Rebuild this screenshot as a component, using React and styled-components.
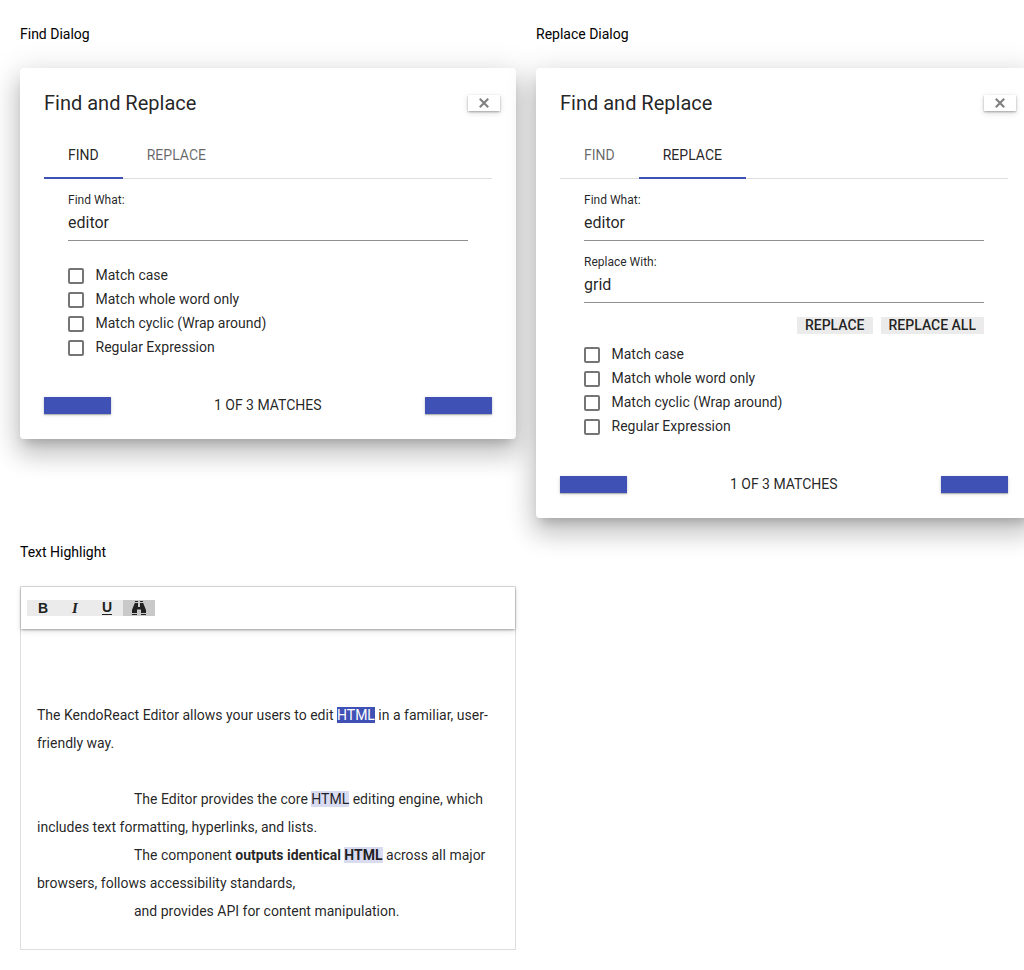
import React from "react";
import styled, { createGlobalStyle } from "styled-components";

const GlobalStyle = createGlobalStyle`
  *, *::before, *::after { box-sizing: border-box; }
  body {
    margin: 0;
    background: #fff;
    color: #000;
    font: 400 14px/28px Roboto, "Liberation Sans", sans-serif;
    overflow: hidden;
  }
  button, input { font-family: inherit; }
`;

const ink = "rgba(0, 0, 0, 0.87)";
const primary = "#3f51b5";
const flat = "0 1px 1px rgba(0,0,0,.22), 0 1px 4px rgba(0,0,0,.14)";
const raised = "0 1px 2px rgba(0,0,0,.3), 0 2px 6px rgba(0,0,0,.14)";

const Page = styled.main`
  display: grid;
  grid-template-columns: 496px 496px;
  gap: 20px;
  align-items: start;
  width: 1032px;
  padding: 20px;
`;

const Section = styled.section`
  display: flex;
  flex-direction: column;
  gap: 20px;
`;

const SectionTitle = styled.div`
  height: 28px;
`;

const Dialog = styled.div`
  height: ${(p) => p.$height}px;
  padding: 0 24px;
  border-radius: 4px;
  background: #fff;
  color: ${ink};
  display: flex;
  flex-direction: column;
  box-shadow: 0 8px 10px -5px rgba(0,0,0,.2), 0 16px 24px 2px rgba(0,0,0,.14),
    0 6px 30px 5px rgba(0,0,0,.12);
`;

const TitleBar = styled.header`
  display: flex;
  align-items: center;
  justify-content: space-between;
  height: 70px;
  margin-right: -8px;
  font-size: 20px;
`;

const CloseButton = styled.button`
  display: flex;
  align-items: center;
  justify-content: center;
  width: 32px;
  height: 16px;
  padding: 0;
  border: 0;
  background: #fff;
  color: #808080;
  box-shadow: ${raised};
`;

const Tabs = styled.nav`
  display: flex;
  height: 41px;
  border-bottom: 1px solid #dedede;
`;

const Tab = styled.div`
  height: 41px;
  padding: 3px 24px 0;
  color: ${(p) => (p.$active ? ink : "rgba(0, 0, 0, 0.6)")};
  border-bottom: 2px solid ${(p) => (p.$active ? primary : "transparent")};
`;

const Form = styled.div`
  display: flex;
  flex-direction: column;
  padding: 13px 24px 0;
`;

const Field = styled.label`
  display: flex;
  flex-direction: column;
  height: 49px;
  margin-bottom: 13px;
  border-bottom: 1px solid #8f8f8f;
`;

const FieldLabel = styled.span`
  font-size: 12px;
  line-height: 16px;
`;

const Input = styled.input`
  width: 100%;
  height: 28px;
  padding: 0;
  border: 0;
  outline: 0;
  background: transparent;
  color: inherit;
  font-size: 16px;
`;

const Actions = styled.div`
  display: flex;
  justify-content: flex-end;
  gap: 8px;
  height: 17px;
  margin: 1px 0 0;
`;

const ActionButton = styled.button`
  height: 17px;
  padding: 0 8px;
  border: 0;
  background: #ebebeb;
  color: ${ink};
  font-size: 14px;
  font-weight: 500;
  line-height: 17px;
`;

const Options = styled.div`
  display: flex;
  flex-direction: column;
  margin-top: ${(p) => p.$top}px;
`;

const Option = styled.label`
  display: flex;
  align-items: center;
  gap: 11.5px;
  height: 24px;
  line-height: 24px;
`;

const Box = styled.span`
  width: 16px;
  height: 16px;
  margin-top: 2px;
  border: 2px solid #757575;
  border-radius: 2px;
`;

const Footer = styled.footer`
  display: flex;
  align-items: center;
  justify-content: space-between;
  height: 17px;
  margin: auto 0 25px;
`;

const MatchCount = styled.span`
  padding: 0 0.5px 1px 0;
  line-height: 16px;
`;

const StepButton = styled.button`
  width: 67px;
  height: 17px;
  padding: 0;
  border: 0;
  background: ${primary};
  box-shadow: ${flat};
`;

const Editor = styled.div`
  height: 364px;
  border: 1px solid #dedede;
  color: ${ink};
`;

const Toolbar = styled.div`
  display: flex;
  align-items: center;
  height: 42px;
  padding: 0 6px;
  background: #fff;
  box-shadow: ${raised};
`;

const Tool = styled.button`
  display: flex;
  align-items: center;
  justify-content: center;
  width: 32px;
  height: 16px;
  padding: 0;
  border: 0;
  background: ${(p) => (p.$active ? "#c9c9c9" : "#ebebeb")};
  color: #212121;
`;

const Bold = styled.span`
  font: 700 14px/16px "Liberation Sans", sans-serif;
`;

const Italic = styled.span`
  font: italic 700 15px/16px "Liberation Serif", serif;
`;

const Underline = styled.span`
  height: 14px;
  border-bottom: 1px solid currentColor;
  font: 700 14px/12px "Liberation Sans", sans-serif;
`;

const Content = styled.div`
  padding: 72px 16px 0;
`;

const Paragraph = styled.p`
  margin: 0 0 ${(p) => p.$gap || 0}px;
  text-indent: ${(p) => (p.$indent ? 97 : 0)}px;
`;

const Match = styled.span`
  background: ${(p) => (p.$current ? primary : "#d9dbf0")};
  color: ${(p) => (p.$current ? "#fff" : "inherit")};
`;

const options = [
  "Match case",
  "Match whole word only",
  "Match cyclic (Wrap around)",
  "Regular Expression",
];

function CloseIcon() {
  return (
    <svg width="10" height="10" viewBox="0 0 10 10">
      <path d="M.8 .8L9.2 9.2M9.2 .8L.8 9.2" fill="none" stroke="currentColor" strokeWidth="2.1" />
    </svg>
  );
}

function BinocularsIcon() {
  return (
    <svg width="14" height="14" viewBox="0 0 14 14" fill="currentColor">
      <path d="M3 0h3v1H3zM8 0h3v1H8zM2.8 2H6v4h2V2h3.2L14 9v3H9V8.5H5V12H0V9zM0 13h5v1H0zM9 13h5v1H9z" />
    </svg>
  );
}

function SearchDialog({ replace }) {
  return (
    <Dialog $height={replace ? 450 : 371}>
      <TitleBar>
        Find and Replace
        <CloseButton aria-label="Close"><CloseIcon /></CloseButton>
      </TitleBar>
      <Tabs>
        <Tab $active={!replace}>FIND</Tab>
        <Tab $active={replace}>REPLACE</Tab>
      </Tabs>
      <Form>
        <Field>
          <FieldLabel>Find What:</FieldLabel>
          <Input defaultValue="editor" />
        </Field>
        {replace && (
          <>
            <Field>
              <FieldLabel>Replace With:</FieldLabel>
              <Input defaultValue="grid" />
            </Field>
            <Actions>
              <ActionButton>REPLACE</ActionButton>
              <ActionButton>REPLACE ALL</ActionButton>
            </Actions>
          </>
        )}
        <Options $top={replace ? 8 : 9}>
          {options.map((text) => (
            <Option key={text}><Box />{text}</Option>
          ))}
        </Options>
      </Form>
      <Footer>
        <StepButton aria-label="Previous" />
        <MatchCount>1 OF 3 MATCHES</MatchCount>
        <StepButton aria-label="Next" />
      </Footer>
    </Dialog>
  );
}

export default function App() {
  return (
    <>
      <GlobalStyle />
      <Page>
        <Section>
          <SectionTitle>Find Dialog</SectionTitle>
          <SearchDialog replace={false} />
        </Section>
        <Section>
          <SectionTitle>Replace Dialog</SectionTitle>
          <SearchDialog replace />
        </Section>
        <Section>
          <SectionTitle>Text Highlight</SectionTitle>
          <Editor>
            <Toolbar>
              <Tool><Bold>B</Bold></Tool>
              <Tool><Italic>I</Italic></Tool>
              <Tool><Underline>U</Underline></Tool>
              <Tool $active aria-label="Find"><BinocularsIcon /></Tool>
            </Toolbar>
            <Content>
              <Paragraph $gap={28}>
                The KendoReact Editor allows your users to edit <Match $current>HTML</Match> in a
                familiar, user-friendly way.
              </Paragraph>
              <Paragraph $indent>
                The Editor provides the core <Match>HTML</Match> editing engine, which includes text
                formatting, hyperlinks, and lists.
              </Paragraph>
              <Paragraph $indent>
                The component <b>outputs identical <Match>HTML</Match></b> across all major
                browsers, follows accessibility standards,
              </Paragraph>
              <Paragraph $indent>and provides API for content manipulation.</Paragraph>
            </Content>
          </Editor>
        </Section>
      </Page>
    </>
  );
}
